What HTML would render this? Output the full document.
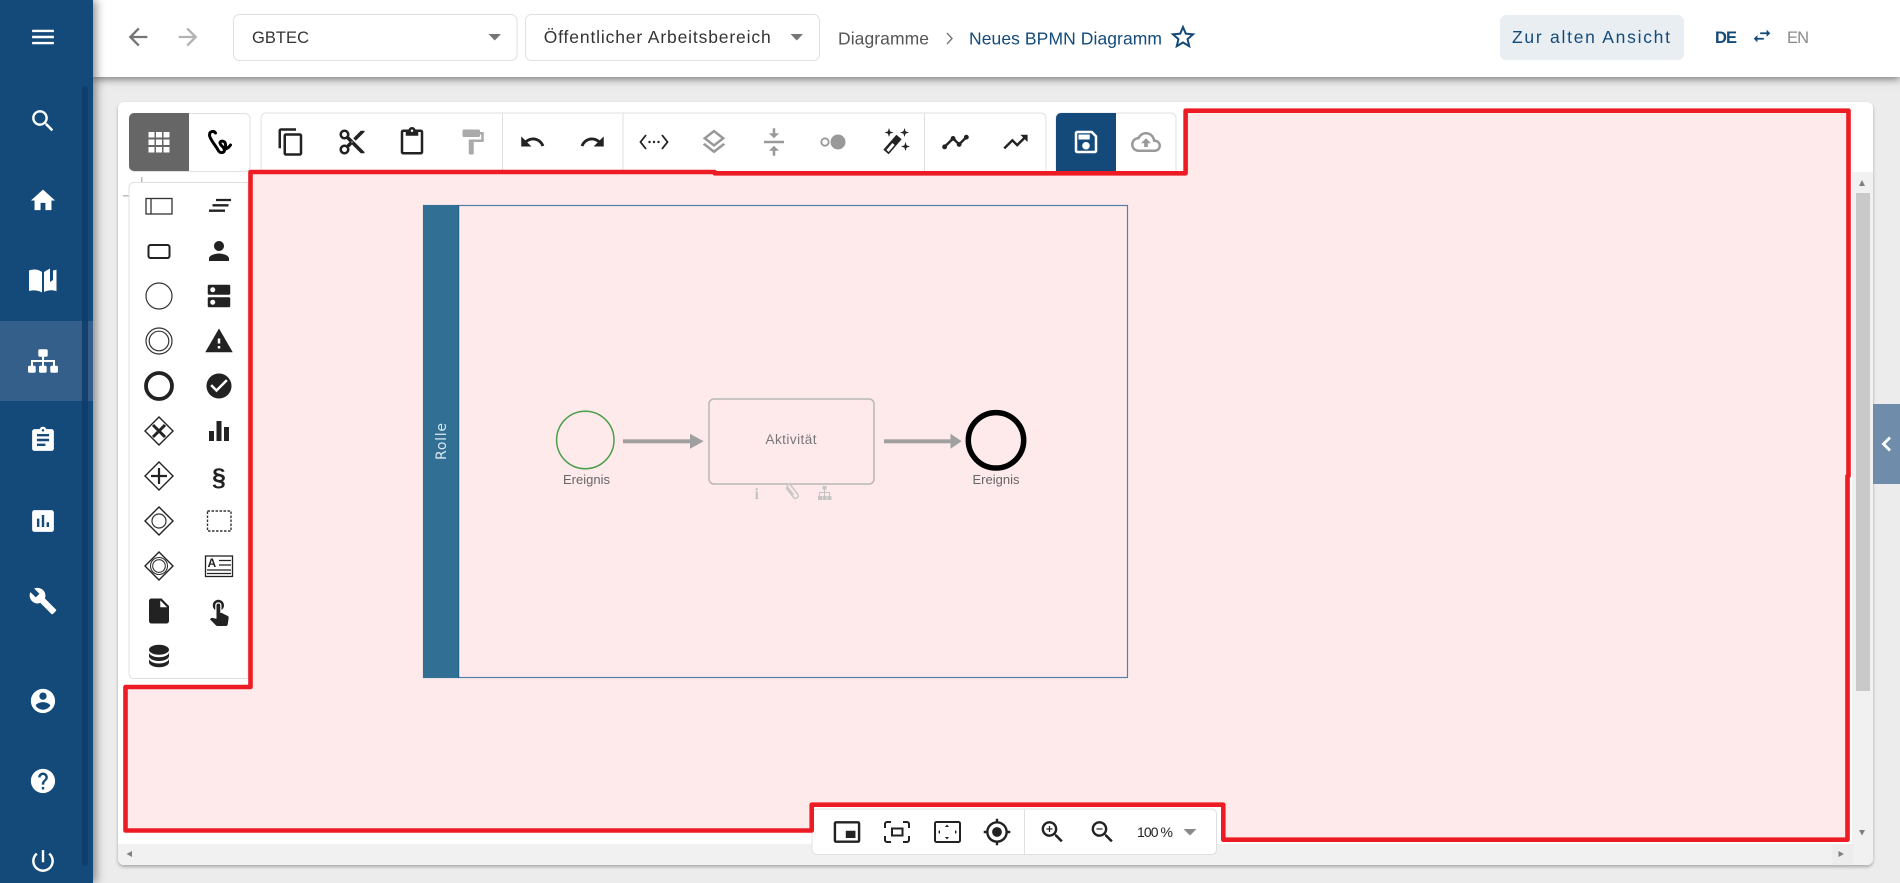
<!DOCTYPE html>
<html lang="de"><head><meta charset="utf-8"><title>Neues BPMN Diagramm</title>
<style>
html,body{margin:0;padding:0;width:1900px;height:883px;overflow:hidden;background:#ececec;font-family:"Liberation Sans",sans-serif}
.a{position:absolute;box-sizing:border-box}
text{font-family:"Liberation Sans",sans-serif}
</style></head><body>
<div class="a" style="left:118px;top:102px;width:1755px;height:763px;background:#fff;border-radius:6px;box-shadow:0 2px 3px rgba(0,0,0,.28)"></div>
<div class="a" style="left:93px;top:0;width:1807px;height:77px;background:#fff;box-shadow:0 2px 8px rgba(0,0,0,.5)"></div>
<div class="a" style="left:0;top:0;width:93px;height:883px;background:#144a7a;box-shadow:3px 0 9px rgba(0,0,0,.45)"></div>
<svg class="a" style="left:0;top:0" width="1900" height="883" viewBox="0 0 1900 883" xmlns="http://www.w3.org/2000/svg">
<!-- sidebar -->
<rect x="0" y="321" width="93" height="80" fill="#345f8a"/>
<rect x="82" y="86" width="6" height="780" rx="3" fill="#0f3c67" opacity=".85"/>
<g fill="#fff">
<svg x="28.5" y="22.5" width="29" height="29" viewBox="0 0 24 24"><path d="M3 18h18v-2H3v2zm0-5h18v-2H3v2zm0-7v2h18V6H3z"/></svg>
<svg x="28.5" y="106.5" width="29" height="29" viewBox="0 0 24 24"><path d="M15.5 14h-.79l-.28-.27C15.41 12.59 16 11.11 16 9.5 16 5.91 13.09 3 9.5 3S3 5.91 3 9.5 5.91 16 9.5 16c1.61 0 3.09-.59 4.23-1.57l.27.28v.79l5 4.99L20.49 19l-4.99-5zm-6 0C7.01 14 5 11.99 5 9.5S7.01 5 9.5 5 14 7.01 14 9.5 11.99 14 9.5 14z"/></svg>
<svg x="28.5" y="186" width="29" height="29" viewBox="0 0 24 24"><path d="M10 20v-6h4v6h5v-8h3L12 3 2 12h3v8z"/></svg>
<path d="M29 270.500c4-1.500 9-1.500 13 1.500v20.500c-4-2.500-9-2.500-13-1.500z"/>
<path d="M44 272l6-3.500v13.500l3-2v-9.500l3.500-.8v21.500c-4-1.500-9-1.300-12.500.800z"/>
<rect x="38.3" y="349.3" width="9.4" height="7.4" rx="1.5"/><rect x="28" y="365.7" width="7.7" height="7" rx="1.5"/><rect x="39" y="365.7" width="7.7" height="7" rx="1.5"/><rect x="50.3" y="365.7" width="7.7" height="7" rx="1.5"/>
<path d="M42 356h2v4h11v6h-2v-4H44v4h-2v-4H33v4h-2v-6h11z"/>
<svg x="28.5" y="425.5" width="29" height="29" viewBox="0 0 24 24"><path d="M19 3h-4.18C14.4 1.84 13.3 1 12 1c-1.3 0-2.4.84-2.82 2H5c-1.1 0-2 .9-2 2v14c0 1.1.9 2 2 2h14c1.1 0 2-.9 2-2V5c0-1.1-.9-2-2-2zm-7 0c.55 0 1 .45 1 1s-.45 1-1 1-1-.45-1-1 .45-1 1-1zm2 14H7v-2h7v2zm3-4H7v-2h10v2zm0-4H7V7h10v2z"/></svg>
<svg x="28.5" y="506.5" width="29" height="29" viewBox="0 0 24 24"><path d="M19 3H5c-1.1 0-2 .9-2 2v14c0 1.1.9 2 2 2h14c1.1 0 2-.9 2-2V5c0-1.1-.9-2-2-2zM9 17H7v-7h2v7zm4 0h-2V7h2v10zm4 0h-2v-4h2v4z"/></svg>
<svg x="28.5" y="586.5" width="29" height="29" viewBox="0 0 24 24"><path d="M22.7 19l-9.1-9.1c.9-2.3.4-5-1.5-6.9-2-2-5-2.4-7.4-1.3L9 6 6 9 1.6 4.7C.4 7.1.9 10.1 2.9 12.1c1.9 1.9 4.6 2.4 6.9 1.5l9.1 9.1c.4.4 1 .4 1.4 0l2.3-2.3c.5-.4.5-1.1.1-1.4z"/></svg>
<svg x="28.5" y="686.5" width="29" height="29" viewBox="0 0 24 24"><path d="M12 2C6.48 2 2 6.48 2 12s4.48 10 10 10 10-4.48 10-10S17.52 2 12 2zm0 3c1.66 0 3 1.34 3 3s-1.34 3-3 3-3-1.34-3-3 1.34-3 3-3zm0 14.2c-2.5 0-4.71-1.28-6-3.22.03-1.99 4-3.08 6-3.08 1.99 0 5.97 1.09 6 3.08-1.29 1.94-3.5 3.22-6 3.22z"/></svg>
<svg x="28.5" y="766.5" width="29" height="29" viewBox="0 0 24 24"><path d="M12 2C6.48 2 2 6.48 2 12s4.48 10 10 10 10-4.48 10-10S17.52 2 12 2zm1 17h-2v-2h2v2zm2.07-7.75l-.9.92C13.45 12.9 13 13.5 13 15h-2v-.5c0-1.1.45-2.1 1.17-2.83l1.24-1.26c.37-.36.59-.86.59-1.41 0-1.1-.9-2-2-2s-2 .9-2 2H8c0-2.21 1.79-4 4-4s4 1.79 4 4c0 .88-.36 1.68-.93 2.25z"/></svg>
<svg x="28.5" y="846.5" width="29" height="29" viewBox="0 0 24 24"><path d="M13 3h-2v10h2V3zm4.83 2.17l-1.42 1.42C17.99 7.86 19 9.81 19 12c0 3.87-3.13 7-7 7s-7-3.13-7-7c0-2.19 1.01-4.14 2.58-5.42L6.17 5.17C4.23 6.82 3 9.26 3 12c0 4.97 4.03 9 9 9s9-4.03 9-9c0-2.74-1.23-5.18-3.17-6.83z"/></svg>
</g>
<!-- header -->
<svg x="124" y="23" width="28" height="28" viewBox="0 0 24 24"><path fill="#757575" d="M20 11H7.83l5.59-5.59L12 4l-8 8 8 8 1.41-1.41L7.83 13H20v-2z"/></svg>
<svg x="174" y="23" width="28" height="28" viewBox="0 0 24 24"><path fill="#b3b3b3" d="M12 4l-1.41 1.41L16.17 11H4v2h12.17l-5.58 5.59L12 20l8-8z"/></svg>
<rect x="233.5" y="14.5" width="283.500" height="46" rx="6" fill="#fff" stroke="#e0e0e0"/>
<rect x="525.500" y="14.500" width="294" height="46" rx="6" fill="#fff" stroke="#e0e0e0"/>
<text x="252" y="43" font-size="16.500" fill="#333" textLength="57">GBTEC</text>
<path d="M488.500 34h12.500l-6.250 6.500z" fill="#757575"/>
<text x="543.700" y="43" font-size="17.500" fill="#333" textLength="227">Öffentlicher Arbeitsbereich</text>
<path d="M790.500 34h12.500l-6.250 6.500z" fill="#757575"/>
<text x="838" y="44.500" font-size="17.500" fill="#555" textLength="91">Diagramme</text>
<path d="M947 33l5 5.500-5 5.500" fill="none" stroke="#777" stroke-width="1.400"/>
<text x="969" y="44.500" font-size="17.500" fill="#144a7a" textLength="193">Neues BPMN Diagramm</text>
<svg x="1168" y="22" width="30" height="30" viewBox="0 0 24 24"><path fill="#144a7a" d="M22 9.240l-7.190-.62L12 2 9.190 8.630 2 9.240l5.460 4.730L5.820 21 12 17.270 18.180 21l-1.630-7.030L22 9.240zM12 15.400l-3.760 2.270 1-4.280-3.320-2.880 4.380-.38L12 6.100l1.710 4.040 4.380.38-3.320 2.880 1 4.280L12 15.400z"/></svg>
<rect x="1500" y="15" width="184" height="45" rx="6" fill="#e9eef3"/>
<text x="1512" y="43" font-size="17.500" fill="#144a7a" textLength="158">Zur alten Ansicht</text>
<text x="1715" y="43" font-size="16.500" font-weight="bold" fill="#144a7a" textLength="22">DE</text>
<svg x="1751" y="25" width="22" height="22" viewBox="0 0 24 24"><path fill="#144a7a" d="M6.990 11L3 15l3.990 4v-3H14v-2H6.990v-3zM21 9l-3.990-4v3H10v2h7.010v3L21 9z"/></svg>
<text x="1787" y="43" font-size="16.500" fill="#8a8a8a" textLength="22">EN</text>
<!-- scrollbars -->
<rect x="1852" y="172" width="21" height="672" fill="#f1f1f1"/>
<rect x="1856" y="193" width="14" height="498" fill="#c9c9c9"/>
<path d="M1859 186h6l-3-6z" fill="#808080"/><path d="M1859 830h6l-3 5.500z" fill="#808080"/>
<path d="M118 844h1755v15a6 6 0 0 1-6 6H124a6 6 0 0 1-6-6z" fill="#f1f1f1"/>
<rect x="1832" y="844" width="21" height="21" fill="#ededed"/>
<path d="M1838.500 851v6l5.500-3z" fill="#808080"/><path d="M132 851v6l-5.500-3z" fill="#808080"/>
<rect x="1873" y="404" width="27" height="80" fill="#6f8dab"/>
<path d="M1890 437.500l-6.500 6.500 6.500 6.500" fill="none" stroke="#fff" stroke-width="2.800"/>
<!-- ruler ticks -->
<rect x="141" y="177" width="1.500" height="6" fill="#bbb"/><rect x="123" y="195" width="6" height="1.500" fill="#bbb"/>
<!-- red region fill -->
<path d="M250.500 172H714.700V173.300H1185.600V110.700H1848.500V476H1847.500V839.700H1223.300V804.700H811.700V830.500H125.500V687H250.500Z" fill="#ffeaeb"/>
<!-- diagram -->
<rect x="423.500" y="205.500" width="704" height="472" fill="none" stroke="#4f80a6" stroke-width="1.200"/>
<rect x="423" y="205" width="36" height="473" fill="#326f95"/>
<rect x="458.200" y="205" width="1" height="473" fill="#1c5c86"/>
<text transform="translate(446 460) rotate(-90)" font-size="14" fill="#dbe7ee" style='font-family:"DejaVu Sans",sans-serif' textLength="37">Rolle</text>
<circle cx="585.300" cy="440" r="28.700" fill="none" stroke="#4a9e4a" stroke-width="1.500"/>
<text x="563" y="484" font-size="13" fill="#666" textLength="47">Ereignis</text>
<rect x="623" y="439.300" width="68" height="4" fill="#a0a0a0"/><path d="M690 433.800l13.700 7.500-13.700 7.500z" fill="#a0a0a0"/>
<rect x="709" y="399" width="165" height="85" rx="5" fill="none" stroke="#b8b8b8" stroke-width="1.500"/>
<text x="765.500" y="444" font-size="13.500" fill="#777" textLength="51">Aktivität</text>
<text x="754.500" y="499" font-size="16" font-weight="bold" fill="#c4c4c4" style='font-family:"Liberation Serif",serif'>i</text>
<path d="M786 487.500l8 10.500a2.800 2.800 0 0 0 4-3.500l-7.500-9.500a1.800 1.800 0 0 0-3 2l6 8" fill="none" stroke="#c8c8c8" stroke-width="1.500"/>
<g fill="#c4c4c4"><rect x="822.500" y="486" width="4" height="3.500"/><rect x="818" y="496" width="4" height="4"/><rect x="822.700" y="496" width="4" height="4"/><rect x="827.400" y="496" width="4" height="4"/><path d="M824 489h1v3h5v4h-1v-3h-4v3h-1v-3h-4v3h-1v-4h5z"/></g>
<rect x="884" y="439.300" width="67" height="4" fill="#a0a0a0"/><path d="M950.500 433.800l11.200 7.500-11.200 7.500z" fill="#a0a0a0"/>
<circle cx="996" cy="440.300" r="27.700" fill="none" stroke="#000" stroke-width="5.500"/>
<text x="972.500" y="484" font-size="13" fill="#666" textLength="47">Ereignis</text>
<!-- toolbar groups -->
<rect x="129.500" y="113.500" width="120.500" height="58" rx="5" fill="#fff" stroke="#e0e0e0"/>
<path d="M189 113H134a5 5 0 0 0-5 5v48a5 5 0 0 0 5 5h55z" fill="#666"/>
<g fill="#fff"><rect x="148.500" y="132" width="6" height="5.500"/><rect x="156" y="132" width="6" height="5.500"/><rect x="163.500" y="132" width="6" height="5.500"/><rect x="148.500" y="139.500" width="6" height="5.500"/><rect x="156" y="139.500" width="6" height="5.500"/><rect x="163.500" y="139.500" width="6" height="5.500"/><rect x="148.500" y="147" width="6" height="5.500"/><rect x="156" y="147" width="6" height="5.500"/><rect x="163.500" y="147" width="6" height="5.500"/></g>
<path d="M215.500 133C214 130.500 209.500 131 209.500 135C209.500 139 216 146 218 150C220 154 225 153 224.500 149.500C224 147 219.500 145 220 142.500C220.500 140.500 225 140.500 225.500 144C226 147 225 149 224 149C226 149.500 229 147.500 230.500 145" fill="none" stroke="#000" stroke-width="3" stroke-linecap="round" stroke-linejoin="round"/>
<path d="M266 113H1041a5 5 0 0 1 5 5V172H261V118a5 5 0 0 1 5-5z" fill="#fff" stroke="#e0e0e0"/>
<path d="M502.500 113V172M623 113V172M924.500 113V172" stroke="#e0e0e0"/>
<path d="M1061 113H1171a5 5 0 0 1 5 5V172H1056V118a5 5 0 0 1 5-5z" fill="#fff" stroke="#e0e0e0"/>
<path d="M1061 113H1116V172H1056V118a5 5 0 0 1 5-5z" fill="#144a7a"/>
<g fill="#222">
<svg x="276" y="127" width="30" height="30" viewBox="0 0 24 24"><path d="M16 1H4c-1.100 0-2 .9-2 2v14h2V3h12V1zm3 4H8c-1.100 0-2 .9-2 2v14c0 1.100.9 2 2 2h11c1.100 0 2-.9 2-2V7c0-1.100-.9-2-2-2zm0 16H8V7h11v14z"/></svg>
<svg x="337" y="127" width="30" height="30" viewBox="0 0 24 24"><path d="M9.640 7.640c.23-.5.36-1.050.36-1.640 0-2.210-1.790-4-4-4S2 3.790 2 6s1.790 4 4 4c.59 0 1.140-.13 1.640-.36L10 12l-2.360 2.360C7.140 14.130 6.590 14 6 14c-2.210 0-4 1.790-4 4s1.790 4 4 4 4-1.790 4-4c0-.59-.13-1.140-.36-1.640L12 14l7 7h3v-1L9.640 7.640zM6 8c-1.100 0-2-.89-2-2s.9-2 2-2 2 .89 2 2-.9 2-2 2zm0 12c-1.100 0-2-.89-2-2s.9-2 2-2 2 .89 2 2-.9 2-2 2zm6-7.500c-.28 0-.5-.22-.5-.5s.22-.5.5-.5.5.22.5.5-.22.5-.5.5zM19 3l-6 6 2 2 7-7V3z"/></svg>
<svg x="397" y="127" width="30" height="30" viewBox="0 0 24 24"><path d="M19 2h-4.180C14.400.84 13.300 0 12 0c-1.300 0-2.400.84-2.820 2H5c-1.100 0-2 .9-2 2v16c0 1.100.9 2 2 2h14c1.100 0 2-.9 2-2V4c0-1.100-.9-2-2-2zm-7 0c.55 0 1 .45 1 1s-.45 1-1 1-1-.45-1-1 .45-1 1-1zm7 18H5V4h2v3h10V4h2v16z"/></svg>
<svg x="457.500" y="127" width="30" height="30" viewBox="0 0 24 24"><path fill="#aaa" d="M18 4V3c0-.55-.45-1-1-1H5c-.55 0-1 .45-1 1v4c0 .55.45 1 1 1h12c.55 0 1-.45 1-1V6h1v4H9v11c0 .55.45 1 1 1h2c.55 0 1-.45 1-1v-9h8V4h-3z"/></svg>
<svg x="519" y="128.500" width="27" height="27" viewBox="0 0 24 24"><path d="M12.500 8c-2.650 0-5.050.99-6.900 2.600L2 7v9h9l-3.620-3.620c1.390-1.160 3.160-1.880 5.120-1.880 3.540 0 6.550 2.310 7.600 5.500l2.370-.78C21.080 11.030 17.150 8 12.500 8z"/></svg>
<svg x="579" y="128.500" width="27" height="27" viewBox="0 0 24 24"><path d="M18.400 10.600C16.550 8.990 14.150 8 11.500 8c-4.650 0-8.580 3.030-9.960 7.220L3.900 16c1.050-3.190 4.050-5.500 7.600-5.500 1.950 0 3.730.72 5.120 1.880L13 16h9V7l-3.600 3.600z"/></svg>
<path d="M646 135l-5.500 7 5.500 7M662 135l5.500 7-5.500 7" fill="none" stroke="#222" stroke-width="1.800"/><circle cx="649.500" cy="142" r="1.200"/><circle cx="654" cy="142" r="1.200"/><circle cx="658.500" cy="142" r="1.200"/>
<svg x="699" y="127" width="30" height="30" viewBox="0 0 24 24"><path fill="#999" d="M11.990 18.540l-7.370-5.730L3 14.070l9 7 9-7-1.630-1.270-7.380 5.740zM12 16l7.360-5.730L21 9l-9-7-9 7 1.630 1.270L12 16zm0-11.470L17.740 9 12 13.470 6.260 9 12 4.530z"/></svg>
<svg x="759" y="127" width="30" height="30" viewBox="0 0 24 24"><path fill="#999" d="M8 19h3v4h2v-4h3l-4-4-4 4zm8-14h-3V1h-2v4H8l4 4 4-4zM4 11v2h16v-2H4z"/></svg>
<circle cx="825" cy="142" r="3.700" fill="none" stroke="#999" stroke-width="1.800"/><circle cx="838" cy="142" r="7.500" fill="#999"/>
<path d="M886 152l13-15" stroke="#222" stroke-width="7" fill="none"/>
<path d="M887.500 151l6-7" stroke="#fff" stroke-width="3" fill="none"/>
<path d="M889 128l1.100 3.400 3.400 1.100-3.400 1.100-1.100 3.400-1.100-3.400-3.400-1.100 3.400-1.100zM904.500 128l1.100 3.400 3.400 1.100-3.400 1.100-1.100 3.400-1.100-3.400-3.400-1.100 3.400-1.100zM905.500 142l1.100 3.400 3.400 1.100-3.400 1.100-1.100 3.400-1.100-3.400-3.400-1.100 3.400-1.100z"/>
<svg x="941" y="127.500" width="29" height="29" viewBox="0 0 24 24"><path d="M23 8c0 1.100-.9 2-2 2-.18 0-.35-.02-.51-.07l-3.560 3.550c.05.16.07.34.07.52 0 1.100-.9 2-2 2s-2-.9-2-2c0-.18.02-.36.07-.52l-2.550-2.550c-.16.05-.34.07-.52.07s-.36-.02-.52-.07l-4.550 4.560c.05.16.07.33.07.51 0 1.100-.9 2-2 2s-2-.9-2-2 .9-2 2-2c.18 0 .35.02.51.07l4.560-4.550C8.020 9.360 8 9.180 8 9c0-1.100.9-2 2-2s2 .9 2 2c0 .18-.02.36-.07.52l2.550 2.550c.16-.05.34-.07.52-.07s.36.02.52.07l3.550-3.560C19.020 8.350 19 8.180 19 8c0-1.100.9-2 2-2s2 .9 2 2z"/></svg>
<svg x="1001" y="127.500" width="29" height="29" viewBox="0 0 24 24"><path d="M16 6l2.290 2.290-4.880 4.880-4-4L2 16.590 3.410 18l6-6 4 4 6.300-6.290L22 12V6z"/></svg>
</g>
<svg x="1071" y="127" width="30" height="30" viewBox="0 0 24 24"><path fill="#fff" d="M17 3H5c-1.110 0-2 .9-2 2v14c0 1.100.89 2 2 2h14c1.100 0 2-.9 2-2V7l-4-4zm2 16H5V5h11.170L19 7.830V19zm-7-7c-1.660 0-3 1.340-3 3s1.340 3 3 3 3-1.340 3-3-1.340-3-3-3zM6 6h9v4H6z"/></svg>
<svg x="1131" y="127" width="30" height="30" viewBox="0 0 24 24"><path fill="#999" d="M19.350 10.040C18.670 6.590 15.640 4 12 4 9.110 4 6.600 5.640 5.350 8.040 2.340 8.360 0 10.910 0 14c0 3.310 2.690 6 6 6h13c2.760 0 5-2.240 5-5 0-2.640-2.050-4.780-4.650-4.960zM19 18H6c-2.210 0-4-1.790-4-4 0-2.050 1.530-3.760 3.560-3.970l1.070-.11.5-.95C8.080 7.140 9.940 6 12 6c2.620 0 4.880 1.860 5.390 4.430l.3 1.500 1.530.11c1.560.1 2.780 1.410 2.780 2.960 0 1.650-1.350 3-3 3zM8 13h2.550v3h2.900v-3H16l-4-4z"/></svg>
<!-- palette -->
<path d="M248 182.500H134a5 5 0 0 0-5 5V673.500a5 5 0 0 0 5 5H248z" fill="#fff" stroke="#e0e0e0"/>
<g fill="none" stroke="#333">
<rect x="146" y="198.500" width="26" height="15.500" stroke-width="1.300"/><path d="M151 198.500V214" stroke-width="1.300"/>
<path d="M216 200h15M212.500 205.300h16M209 210.700h16" stroke="#222" stroke-width="2.300"/>
<rect x="148.500" y="245" width="21" height="13" rx="2" stroke="#222" stroke-width="2"/>
<circle cx="159" cy="296" r="13" stroke-width="1.200"/>
<circle cx="159" cy="341" r="13" stroke-width="1.200"/><circle cx="159" cy="341" r="9.800" stroke-width="1.200"/>
<circle cx="159" cy="386" r="13" stroke="#222" stroke-width="3.800"/>
<path d="M159 417l14 14-14 14-14-14zM159 462l14 14-14 14-14-14zM159 507l14 14-14 14-14-14zM159 552l14 14-14 14-14-14z" stroke="#222" stroke-width="1.400"/>
<path d="M153 425l12 12M165 425l-12 12" stroke="#222" stroke-width="3"/>
<path d="M159 468v16M151 476h16" stroke="#222" stroke-width="2.200"/>
<circle cx="159" cy="521" r="7" stroke-width="1.200"/>
<circle cx="159" cy="566" r="8.500" stroke-width="1.100"/><circle cx="159" cy="566" r="6.300" stroke-width="1.100"/>
<rect x="207.500" y="511" width="23.500" height="20" stroke-dasharray="2.500 1.500" stroke-width="1.400"/>
<rect x="205.500" y="556" width="27" height="20.500" stroke="#222" stroke-width="1.300"/>
<path d="M219 560.500h12M219 565h12M207 570h24M207 573.500h24" stroke="#222" stroke-width="1.300"/>
</g>
<text x="207.500" y="567" font-size="12" font-weight="bold" fill="#222">A</text>
<text x="219" y="486" font-size="25" font-weight="bold" fill="#222" text-anchor="middle">§</text>
<g fill="#222">
<svg x="204" y="236" width="30" height="30" viewBox="0 0 24 24"><path d="M12 12c2.210 0 4-1.790 4-4s-1.790-4-4-4-4 1.790-4 4 1.790 4 4 4zm0 2c-2.670 0-8 1.340-8 4v2h16v-2c0-2.660-5.330-4-8-4z"/></svg>
<svg x="204" y="281" width="30" height="30" viewBox="0 0 24 24"><path d="M20 13H4c-.55 0-1 .45-1 1v6c0 .55.45 1 1 1h16c.55 0 1-.45 1-1v-6c0-.55-.45-1-1-1zM7 19c-1.100 0-2-.9-2-2s.9-2 2-2 2 .9 2 2-.9 2-2 2zM20 3H4c-.55 0-1 .45-1 1v6c0 .55.45 1 1 1h16c.55 0 1-.45 1-1V4c0-.55-.45-1-1-1zM7 9c-1.100 0-2-.9-2-2s.9-2 2-2 2 .9 2 2-.9 2-2 2z"/></svg>
<svg x="204" y="326" width="30" height="30" viewBox="0 0 24 24"><path d="M1 21h22L12 2 1 21zm12-3h-2v-2h2v2zm0-4h-2v-4h2v4z"/></svg>
<svg x="204" y="371" width="30" height="30" viewBox="0 0 24 24"><path d="M12 2C6.480 2 2 6.480 2 12s4.480 10 10 10 10-4.480 10-10S17.520 2 12 2zm-2 15l-5-5 1.410-1.410L10 14.170l7.590-7.590L19 8l-9 9z"/></svg>
<rect x="209" y="431" width="5" height="10"/><rect x="216.500" y="421" width="5" height="20"/><rect x="224" y="427" width="5" height="14"/>
<svg x="144" y="596" width="30" height="30" viewBox="0 0 24 24"><path d="M6 2c-1.100 0-1.990.9-1.990 2L4 20c0 1.100.89 2 1.990 2H18c1.100 0 2-.9 2-2V8l-6-6H6zm7 7V3.500L18.500 9H13z"/></svg>
<svg x="204" y="596" width="30" height="30" viewBox="0 0 24 24"><path d="M9 11.240V7.500C9 6.120 10.120 5 11.500 5S14 6.120 14 7.500v3.740c1.210-.81 2-2.180 2-3.740C16 5.010 13.990 3 11.500 3S7 5.010 7 7.500c0 1.560.79 2.930 2 3.740zm9.840 4.630l-4.540-2.260c-.17-.07-.35-.11-.54-.11H13v-6c0-.83-.67-1.500-1.500-1.500S10 6.670 10 7.500v10.740l-3.430-.72c-.08-.01-.15-.03-.24-.03-.31 0-.59.13-.79.33l-.79.8 4.940 4.940c.27.27.65.44 1.060.44h6.790c.75 0 1.330-.55 1.440-1.280l.75-5.270c.01-.07.02-.14.02-.2 0-.62-.38-1.160-.91-1.380z"/></svg>
<svg x="144" y="641" width="30" height="30" viewBox="0 0 24 24"><path d="M12 3C7.580 3 4 4.790 4 7c0 2.210 3.580 4 8 4s8-1.790 8-4c0-2.210-3.580-4-8-4zM4 9v3c0 2.210 3.580 4 8 4s8-1.790 8-4V9c0 2.210-3.580 4-8 4s-8-1.790-8-4zm0 5v3c0 2.210 3.580 4 8 4s8-1.790 8-4v-3c0 2.210-3.580 4-8 4s-8-1.790-8-4z"/></svg>
</g>
<!-- zoom bar -->
<rect x="812" y="809" width="404.500" height="45.500" rx="5" fill="#fff" stroke="#e0e0e0"/>
<path d="M1024.500 809V854" stroke="#e0e0e0"/>
<g fill="#222">
<svg x="832.500" y="817.500" width="29" height="29" viewBox="0 0 24 24"><path d="M19 11h-8v6h8v-6zm4 8V4.980C23 3.880 22.100 3 21 3H3c-1.100 0-2 .88-2 1.980V19c0 1.100.9 2 2 2h18c1.100 0 2-.9 2-2zm-2 .02H3V4.970h18v14.050z"/></svg>
<path d="M885 828v-4a2 2 0 0 1 2-2h4M903 822h4a2 2 0 0 1 2 2v4M909 836v4a2 2 0 0 1-2 2h-4M891 842h-4a2 2 0 0 1-2-2v-4" fill="none" stroke="#222" stroke-width="2"/>
<rect x="892" y="828.500" width="10.500" height="7" fill="none" stroke="#222" stroke-width="2"/>
<rect x="935" y="822" width="25" height="20" rx="1.500" fill="none" stroke="#222" stroke-width="2"/>
<path d="M945 827l2-2.500 2 2.500zM945 837l2 2.500 2-2.500zM940 830l-2 2 2 2zM955 830l2 2-2 2z"/>
<svg x="982.500" y="817.500" width="29" height="29" viewBox="0 0 24 24"><path d="M12 8c-2.210 0-4 1.790-4 4s1.790 4 4 4 4-1.790 4-4-1.790-4-4-4zm8.940 3c-.46-4.170-3.770-7.480-7.940-7.940V1h-2v2.060C6.830 3.520 3.520 6.830 3.060 11H1v2h2.060c.46 4.170 3.770 7.480 7.940 7.940V23h2v-2.060c4.170-.46 7.480-3.770 7.940-7.940H23v-2h-2.060zM12 19c-3.870 0-7-3.130-7-7s3.130-7 7-7 7 3.130 7 7-3.130 7-7 7z"/></svg>
<svg x="1038" y="817.500" width="29" height="29" viewBox="0 0 24 24"><path d="M15.500 14h-.79l-.28-.27C15.410 12.590 16 11.110 16 9.500 16 5.910 13.090 3 9.500 3S3 5.910 3 9.500 5.910 16 9.500 16c1.610 0 3.090-.59 4.230-1.570l.27.28v.79l5 4.990L20.490 19l-4.990-5zm-6 0C7.010 14 5 11.990 5 9.500S7.010 5 9.500 5 14 7.010 14 9.500 11.990 14 9.500 14z"/><path d="M12 10h-2v2H9v-2H7V9h2V7h1v2h2v1z"/></svg>
<svg x="1088" y="817.500" width="29" height="29" viewBox="0 0 24 24"><path d="M15.500 14h-.79l-.28-.27C15.410 12.590 16 11.110 16 9.500 16 5.910 13.090 3 9.500 3S3 5.910 3 9.500 5.910 16 9.500 16c1.610 0 3.090-.59 4.230-1.570l.27.28v.79l5 4.990L20.490 19l-4.990-5zm-6 0C7.010 14 5 11.990 5 9.500S7.010 5 9.500 5 14 7.010 14 9.500 11.990 14 9.500 14z"/><path d="M7 9h5v1H7z"/></svg>
</g>
<text x="1137" y="837" font-size="14" fill="#222" textLength="36">100 %</text>
<path d="M1183.500 829h13l-6.500 6.500z" fill="#8a8a8a"/>
<!-- red outline -->
<path d="M250.500 172H714.700V173.300H1185.600V110.700H1848.500V476H1847.500V839.700H1223.300V804.700H811.700V830.500H125.500V687H250.500Z" fill="none" stroke="#ed1c24" stroke-width="4.600" stroke-linejoin="round"/>
</svg>
</body></html>
